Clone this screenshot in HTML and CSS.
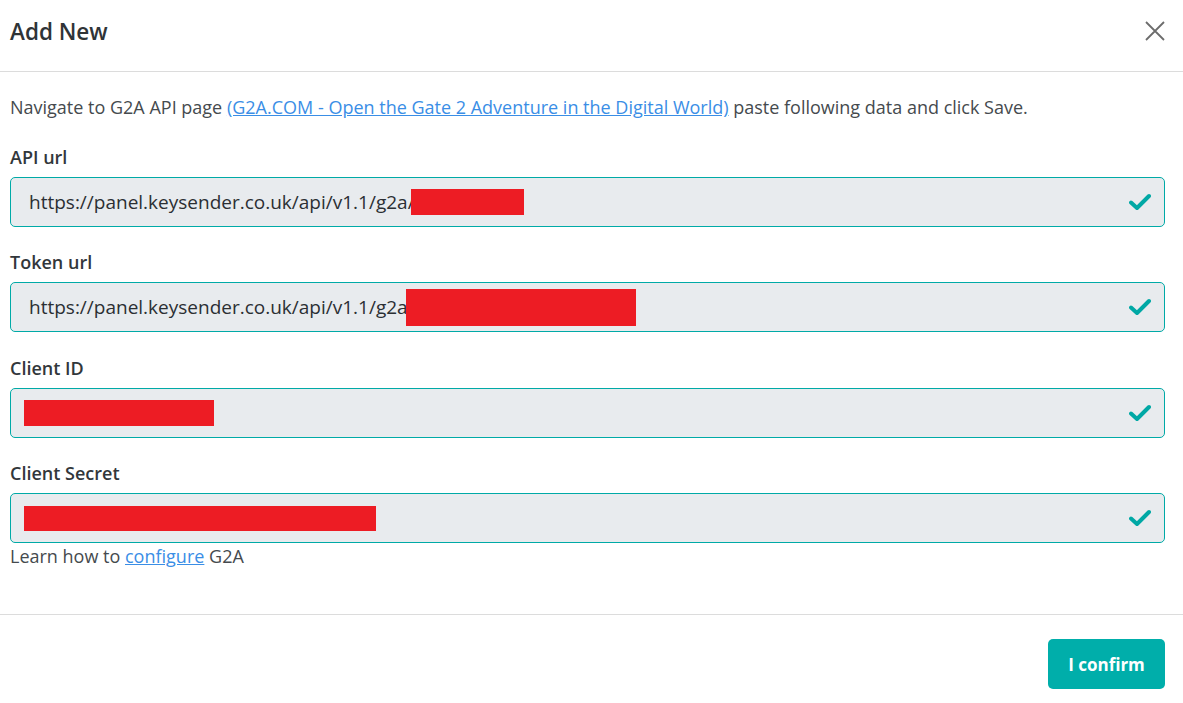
FILE: index.html
```html
<!DOCTYPE html>
<html lang="en">
<head>
    <meta charset="UTF-8">
    <title>Add New</title>
    <link rel="stylesheet" href="styles.css">
</head>
<body>
    <div class="modal">
        <div class="modal-header">
            <h2>Add New</h2>
            <button class="close" type="button" aria-label="Close">
                <svg width="20" height="20" viewBox="0 0 20 20"><path d="M1 1 L19 19 M19 1 L1 19" stroke="#6c6c6c" stroke-width="1.8" fill="none"/></svg>
            </button>
        </div>

        <div class="modal-body">
            <p class="intro">Navigate to G2A API page <a href="#">(G2A.COM - Open the Gate 2 Adventure in the Digital World)</a> paste following data and click Save.</p>

            <div class="field">
                <label>API url</label>
                <div class="input">
                    <span class="value">https://panel.keysender.co.uk/api/v1.1/g2a/(</span>
                    <span class="redact redact-api"></span>
                    <svg class="check" viewBox="0 0 22 18"><path d="M2 9.5 L8 15 L20 3" stroke="#00a8a5" stroke-width="4" fill="none" stroke-linecap="round" stroke-linejoin="round"/></svg>
                </div>
            </div>

            <div class="field">
                <label>Token url</label>
                <div class="input">
                    <span class="value">https://panel.keysender.co.uk/api/v1.1/g2a/</span>
                    <span class="redact redact-token"></span>
                    <svg class="check" viewBox="0 0 22 18"><path d="M2 9.5 L8 15 L20 3" stroke="#00a8a5" stroke-width="4" fill="none" stroke-linecap="round" stroke-linejoin="round"/></svg>
                </div>
            </div>

            <div class="field field-tall">
                <label>Client ID</label>
                <div class="input input-short">
                    <span class="redact redact-id"></span>
                    <svg class="check" viewBox="0 0 22 18"><path d="M2 9.5 L8 15 L20 3" stroke="#00a8a5" stroke-width="4" fill="none" stroke-linecap="round" stroke-linejoin="round"/></svg>
                </div>
            </div>

            <div class="field field-last">
                <label>Client Secret</label>
                <div class="input input-short">
                    <span class="redact redact-secret"></span>
                    <svg class="check" viewBox="0 0 22 18"><path d="M2 9.5 L8 15 L20 3" stroke="#00a8a5" stroke-width="4" fill="none" stroke-linecap="round" stroke-linejoin="round"/></svg>
                </div>
            </div>

            <p class="help">Learn how to <a href="#">configure</a> G2A</p>
        </div>

        <div class="modal-footer">
            <button class="confirm" type="button">I confirm</button>
        </div>
    </div>
</body>
</html>
```

FILE: styles.css
```css
body {
    margin: 0;
    background: #fff;
    font-family: 'Open Sans', 'Liberation Sans', sans-serif;
    color: #3c4043;
}

.modal {
    width: 1183px;
}

.modal-header {
    height: 72px;
    border-bottom: 1px solid #dcdcdc;
    display: flex;
    align-items: center;
    justify-content: space-between;
    padding: 0 18px 0 10px;
    box-sizing: border-box;
}

.modal-header h2 {
    margin: 0;
    font-size: 22.5px;
    font-weight: 600;
    color: #2f3437;
    padding-bottom: 9px;
}

.close {
    border: none;
    background: none;
    padding: 0;
    display: flex;
    margin-bottom: 10px;
}

.modal-body {
    padding: 22px 18px 0 10px;
    height: 543px;
    box-sizing: border-box;
    border-bottom: 1px solid #dcdcdc;
}

.intro {
    margin: 0 0 25px;
    font-size: 18px;
    line-height: 26px;
    color: #454a4e;
}

a {
    color: #3a8ee6;
    text-decoration: underline;
}

.field {
    margin-bottom: 23px;
}

.field:nth-child(3) {
    margin-bottom: 24px;
}

.field-last {
    margin-bottom: 0;
}

.field label {
    display: block;
    font-size: 18px;
    font-weight: 600;
    line-height: 24px;
    margin-bottom: 8px;
    color: #32373b;
}

.input {
    height: 50px;
    box-sizing: border-box;
    border: 1px solid #00aaa7;
    border-radius: 5px;
    background: #e8ebee;
    display: flex;
    align-items: center;
    padding: 0 13px 0 18px;
}

.input-short {
    padding-left: 13px;
}

.value {
    font-size: 19px;
    color: #2b2f33;
    white-space: nowrap;
}

.redact {
    background: #ed1c24;
    height: 26px;
}

.redact-api {
    width: 113px;
    margin-left: -9px;
}

.redact-token {
    width: 230px;
    height: 37px;
    margin-left: -9px;
}

.redact-id {
    width: 190px;
}

.redact-secret {
    width: 352px;
    height: 25px;
}

.check {
    width: 22px;
    height: 18px;
    margin-left: auto;
}

.help {
    margin: 0;
    font-size: 18px;
    line-height: 26px;
    color: #454a4e;
}

.modal-footer {
    display: flex;
    justify-content: flex-end;
    padding: 24px 18px 0 0;
}

.confirm {
    background: #00aeaa;
    color: #fff;
    border: none;
    border-radius: 5px;
    font-family: 'Open Sans', 'Liberation Sans', sans-serif;
    font-size: 17px;
    font-weight: 700;
    width: 117px;
    height: 50px;
    cursor: pointer;
}
```
